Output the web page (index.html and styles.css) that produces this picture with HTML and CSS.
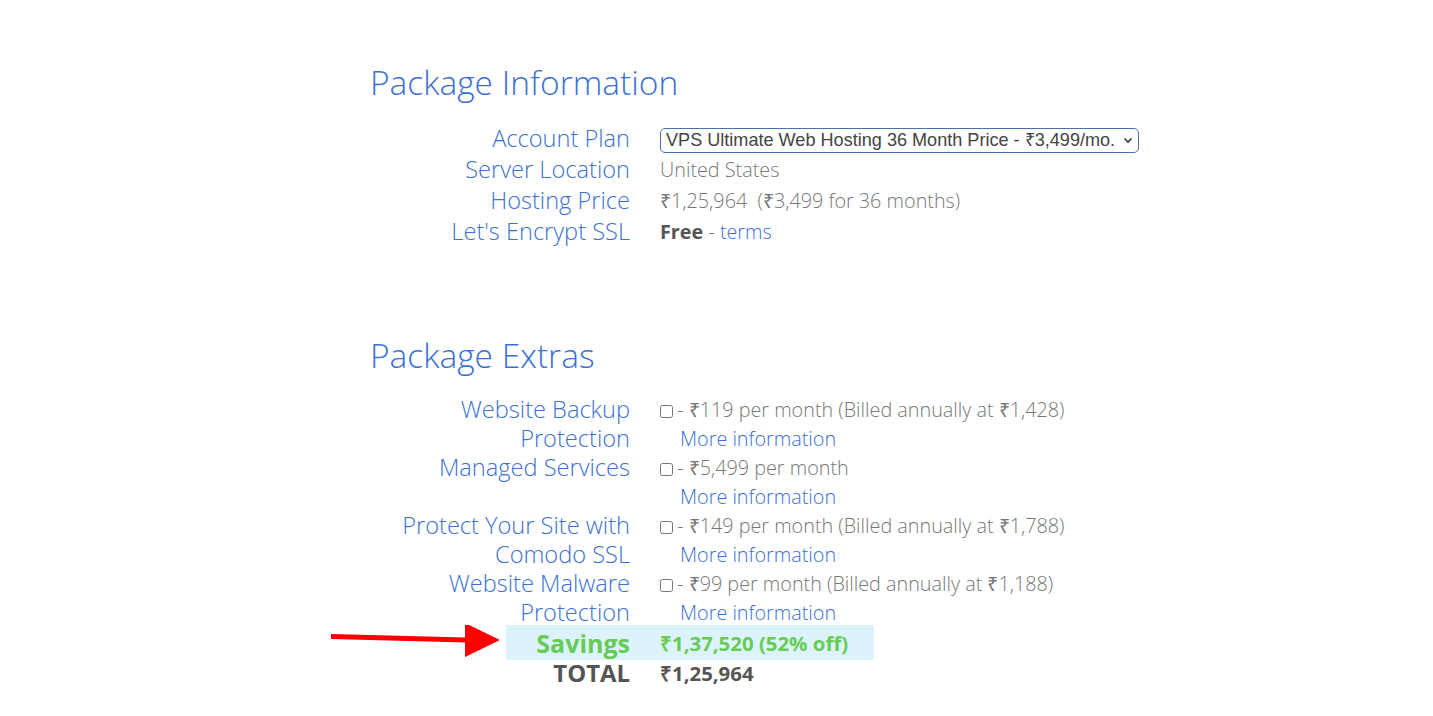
FILE: index.html
```html
<!DOCTYPE html>
<html lang="en">
<head>
    <meta charset="UTF-8">
    <title>Order Summary</title>
    <link rel="stylesheet" href="styles.css">
</head>
<body>
    <div class="order">
        <h2 class="section-title">Package Information</h2>
        <div class="info-grid">
            <div class="label">Account Plan</div>
            <div class="value">
                <div class="plan-select">
                    <span>VPS Ultimate Web Hosting 36 Month Price - ₹3,499/mo.</span>
                    <svg width="10" height="7" viewBox="0 0 10 7"><path d="M1.5 1.5 L5 5 L8.5 1.5" fill="none" stroke="#333" stroke-width="1.6"/></svg>
                </div>
            </div>

            <div class="label">Server Location</div>
            <div class="value">United States</div>

            <div class="label">Hosting Price</div>
            <div class="value">₹1,25,964&nbsp; (₹3,499 for 36 months)</div>

            <div class="label">Let's Encrypt SSL</div>
            <div class="value"><strong class="free">Free</strong> - <a href="#" class="link">terms</a></div>
        </div>

        <h2 class="section-title extras-title">Package Extras</h2>
        <div class="extras-grid">
            <div class="label">Website Backup<br>Protection</div>
            <div class="value extra">
                <label><input type="checkbox"> - ₹119 per month (Billed annually at ₹1,428)</label>
                <a href="#" class="link more">More information</a>
            </div>

            <div class="label">Managed Services</div>
            <div class="value extra">
                <label><input type="checkbox"> - ₹5,499 per month</label>
                <a href="#" class="link more">More information</a>
            </div>

            <div class="label">Protect Your Site with<br>Comodo SSL</div>
            <div class="value extra">
                <label><input type="checkbox"> - ₹149 per month (Billed annually at ₹1,788)</label>
                <a href="#" class="link more">More information</a>
            </div>

            <div class="label">Website Malware<br>Protection</div>
            <div class="value extra">
                <label><input type="checkbox"> - ₹99 per month (Billed annually at ₹1,188)</label>
                <a href="#" class="link more">More information</a>
            </div>
        </div>

        <div class="savings-row">
            <svg class="pointer" width="175" height="35" viewBox="0 0 175 35">
                <path d="M0 9 L135 12.5 L135 17.5 L0 14 Z" fill="#f00"/>
                <path d="M134 -2 L169 15 L134 32 Z" fill="#f00"/>
            </svg>
            <div class="savings">
                <div class="label">Savings</div>
                <div class="value">₹1,37,520 (52% off)</div>
            </div>
        </div>
        <div class="total">
            <div class="label">TOTAL</div>
            <div class="value">₹1,25,964</div>
        </div>
    </div>
</body>
</html>
```

FILE: styles.css
```css
body {
    margin: 0;
    font-family: "Open Sans", "Liberation Sans", sans-serif;
    font-weight: 300;
    background: #fff;
    color: #777;
}
.order {
    width: 693px;
    margin: 0 auto;
    padding-top: 62px;
}
.section-title {
    margin: 0;
    font-size: 33.5px;
    font-weight: 300;
    line-height: 41px;
    color: #3c71d1;
}
.label {
    text-align: right;
    font-size: 23.6px;
    color: #3c71d1;
}
.value {
    font-size: 19.8px;
    white-space: nowrap;
}
.info-grid, .extras-grid {
    display: grid;
    grid-template-columns: 260px 1fr;
    column-gap: 30px;
}
.info-grid {
    margin-top: 20px;
    line-height: 31px;
}
.extras-title {
    margin-top: 88px;
}
.extras-grid {
    margin-top: 19px;
    line-height: 29px;
}
.plan-select {
    display: inline-flex;
    align-items: center;
    gap: 8px;
    height: 23px;
    padding: 0 5px 0 5px;
    border: 1px solid #4d6fae;
    border-radius: 5px;
    font-family: "Liberation Sans", Arial, sans-serif;
    font-weight: 400;
    font-size: 18.1px;
    line-height: 23px;
    color: #444;
    vertical-align: middle;
}
.free {
    font-weight: 700;
    color: #555;
}
.link {
    color: #3c71d1;
    text-decoration: none;
}
.extra label {
    display: block;
}
.extra input {
    margin: 0 -1px 0 0;
    width: 13px;
    height: 13px;
    vertical-align: -1px;
}
.more {
    display: block;
    padding-left: 20px;
}
.savings-row {
    display: flex;
    align-items: center;
    margin-top: -2px;
}
.pointer {
    margin-left: -39px;
}
.savings {
    display: grid;
    grid-template-columns: 124px 1fr;
    column-gap: 30px;
    width: 368px;
    height: 35px;
    align-items: center;
    background: #dcf3fb;
    font-weight: 700;
    line-height: 26px;
    color: #66cc55;
}
.savings .label {
    font-size: 25px;
    color: #66cc55;
}
.savings .value {
    font-size: 20.4px;
    color: #66cc55;
}
.total {
    display: grid;
    grid-template-columns: 260px 1fr;
    column-gap: 30px;
    line-height: 26px;
    font-weight: 700;
    color: #555;
}
.total .label {
    font-size: 23.9px;
    color: #555;
}
.total .value {
    font-size: 20.4px;
}
```
